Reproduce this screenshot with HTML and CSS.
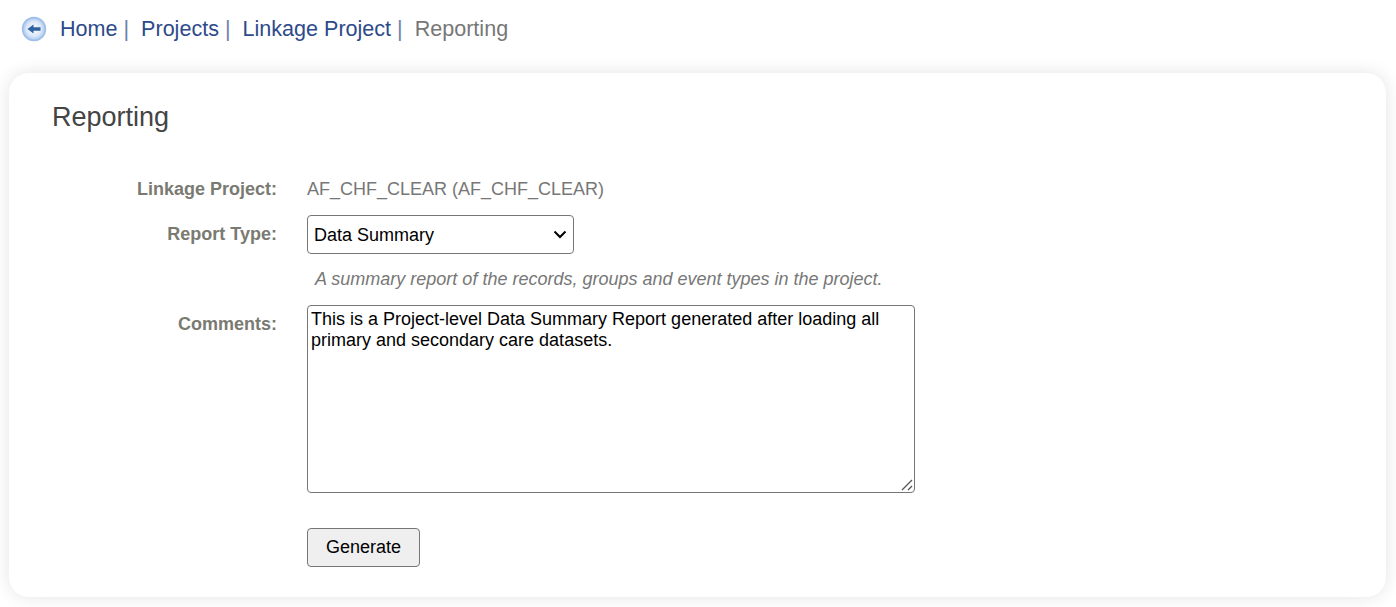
FILE: index.html
```html
<!DOCTYPE html>
<html lang="en">
<head>
  <meta charset="UTF-8" />
  <title>Reporting</title>
  <link rel="stylesheet" href="styles.css">
</head>
<body>
  <nav class="crumbs">
    <a class="back" href="#">
      <svg width="26" height="26" viewBox="0 0 26 26">
        <defs>
          <radialGradient id="ball" cx="50%" cy="50%" r="50%">
            <stop offset="0%" stop-color="#ffffff" />
            <stop offset="65%" stop-color="#dbe7f9" />
            <stop offset="100%" stop-color="#a3c2ec" />
          </radialGradient>
        </defs>
        <circle cx="13" cy="13" r="11.5" fill="url(#ball)" stroke="#9dbde8" stroke-width="1.4" />
        <path d="M6.5 13 L12.5 8.4 V11.2 H19.5 V14.8 H12.5 V17.6 Z" fill="#2f639f" />
      </svg>
    </a>
    <a href="#">Home</a><span class="sep">|</span>
    <a href="#">Projects</a><span class="sep">|</span>
    <a href="#">Linkage Project</a><span class="sep">|</span>
    <span class="current">Reporting</span>
  </nav>

  <main class="card">
    <h1>Reporting</h1>
    <form class="report-form">
      <div class="row row-project">
        <label>Linkage Project:</label>
        <div class="value">AF_CHF_CLEAR (AF_CHF_CLEAR)</div>
      </div>
      <div class="row row-type">
        <label for="type">Report Type:</label>
        <select id="type">
          <option>Data Summary</option>
        </select>
      </div>
      <div class="row row-hint">
        <div></div>
        <div class="hint">A summary report of the records, groups and event types in the project.</div>
      </div>
      <div class="row row-comments">
        <label for="comments">Comments:</label>
        <textarea id="comments">This is a Project-level Data Summary Report generated after loading all primary and secondary care datasets.</textarea>
      </div>
      <div class="row row-submit">
        <div></div>
        <button type="button">Generate</button>
      </div>
    </form>
  </main>
</body>
</html>
```

FILE: styles.css
```css
html, body {
  height: 100%;
}

body {
  margin: 0;
  background: #fff;
  font-family: "Liberation Sans", Arial, sans-serif;
  overflow: hidden;
}

.crumbs {
  display: flex;
  align-items: center;
  height: 58px;
  padding-left: 21px;
  font-size: 21.55px;
  color: #777;
}

.crumbs a {
  color: #2d4a8a;
  text-decoration: none;
}

.back {
  display: flex;
  margin-right: 13px;
}

.sep {
  margin-left: 6px;
  margin-right: 12px;
  color: #6b83a8;
}

.current {
  color: #777;
}

.card {
  box-sizing: border-box;
  height: 524px;
  margin: 15px 10px 0 9px;
  padding: 28px 43px 0;
  background: #fff;
  border-radius: 20px;
  box-shadow: 0 0 18px rgba(0, 0, 0, 0.11);
}

h1 {
  margin: 0;
  font-size: 27px;
  font-weight: normal;
  line-height: 32px;
  color: #444;
}

.report-form {
  margin-top: 32px;
}

.row {
  display: grid;
  grid-template-columns: 225px auto;
  justify-content: start;
  column-gap: 30px;
}

.row label {
  text-align: right;
  font-size: 18px;
  font-weight: bold;
  color: #7a7a72;
}

.row-project {
  box-sizing: border-box;
  height: 50px;
  padding-bottom: 2px;
  align-items: center;
}

.value {
  font-size: 18px;
  color: #777;
}

.row-type {
  align-items: center;
  height: 39px;
}

select {
  appearance: none;
  width: 267px;
  height: 39px;
  padding: 0 6px;
  font-family: "Liberation Sans", Arial, sans-serif;
  font-size: 18px;
  color: #000;
  background: #fff url("data:image/svg+xml,%3Csvg xmlns='http://www.w3.org/2000/svg' width='14' height='9'%3E%3Cpath d='M1.5 1.5 L7 7 L12.5 1.5' fill='none' stroke='%23000' stroke-width='2'/%3E%3C/svg%3E") no-repeat right 6px center;
  border: 1px solid #767676;
  border-radius: 4px;
}

.row-hint {
  height: 51px;
  align-items: center;
}

.hint {
  padding-left: 8px;
  font-size: 18px;
  font-style: italic;
  color: #777;
}

.row-comments label {
  padding-top: 9px;
}

textarea {
  box-sizing: border-box;
  display: block;
  width: 608px;
  height: 188px;
  padding: 3px 3px 2px;
  font-family: "Liberation Sans", Arial, sans-serif;
  font-size: 18px;
  line-height: 21px;
  color: #000;
  border: 1px solid #767676;
  border-radius: 4px;
}

textarea::-webkit-resizer {
  background: url("data:image/svg+xml,%3Csvg xmlns='http://www.w3.org/2000/svg' width='15' height='15'%3E%3Cpath d='M3 13 L13 3 M9 13 L13 9' stroke='%23555' stroke-width='1.3'/%3E%3C/svg%3E") no-repeat center;
}

.row-submit {
  margin-top: 35px;
}

button {
  width: 113px;
  height: 39px;
  padding: 0;
  font-family: "Liberation Sans", Arial, sans-serif;
  font-size: 18px;
  color: #000;
  background: #efefef;
  border: 1px solid #767676;
  border-radius: 4px;
}
```
